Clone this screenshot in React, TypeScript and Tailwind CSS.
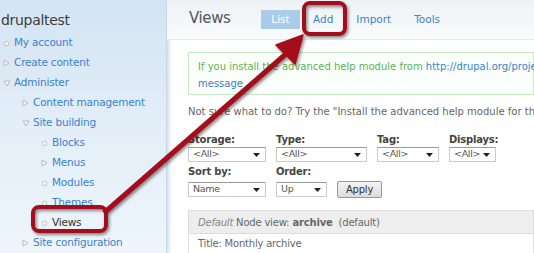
import React from "react";

type Item = { label: string; level: number; kind: "leaf" | "closed" | "open"; active?: boolean };

const menu: Item[] = [
  { label: "My account", level: 0, kind: "leaf" },
  { label: "Create content", level: 0, kind: "closed" },
  { label: "Administer", level: 0, kind: "open" },
  { label: "Content management", level: 1, kind: "closed" },
  { label: "Site building", level: 1, kind: "open" },
  { label: "Blocks", level: 2, kind: "leaf" },
  { label: "Menus", level: 2, kind: "closed" },
  { label: "Modules", level: 2, kind: "leaf" },
  { label: "Themes", level: 2, kind: "leaf" },
  { label: "Views", level: 2, kind: "leaf", active: true },
  { label: "Site configuration", level: 1, kind: "closed" },
];

function Bullet({ kind }: { kind: Item["kind"] }) {
  if (kind === "leaf")
    return (
      <svg width="7" height="7" viewBox="0 0 7 7">
        <circle cx="3.5" cy="3.5" r="2.3" fill="#f4f4f4" stroke="#c4c4c4" strokeWidth="1" />
      </svg>
    );
  if (kind === "closed")
    return (
      <svg width="7" height="8" viewBox="0 0 7 8">
        <path d="M1 1 L6 4 L1 7 Z" fill="#f4f4f4" stroke="#bdbdbd" strokeWidth="1" />
      </svg>
    );
  return (
    <svg width="8" height="7" viewBox="0 0 8 7">
      <path d="M1 1 L7 1 L4 6 Z" fill="#f4f4f4" stroke="#bdbdbd" strokeWidth="1" />
    </svg>
  );
}

function Select({ value, w }: { value: string; w: string }) {
  return (
    <div className={`${w} h-[15px] flex items-center justify-between border border-[#ccc] border-t-[#999] bg-white pl-[4px] pr-[5px] text-[9.5px] font-normal text-[#555] tracking-[-0.3px]`}>
      <span>{value}</span>
      <svg width="7" height="4" viewBox="0 0 7 4" className="shrink-0">
        <path d="M0 0 L7 0 L3.5 4 Z" fill="#222" />
      </svg>
    </div>
  );
}

export default function App() {
  const font = { fontFamily: "'DejaVu Sans', Verdana, sans-serif" };
  return (
    <div className="relative w-[534px] h-[253px] overflow-hidden flex bg-white" style={font}>
      {/* sidebar */}
      <div className="w-[167px] h-full shrink-0 bg-gradient-to-b from-[#d3e4f3] via-[#e3eef8] to-[#eef5fb] border-r border-[#c4d8ea] shadow-[2px_0_4px_rgba(120,150,180,0.35)]">
        <h2 className="pl-px pt-[11px] text-[14px] leading-[18px] text-[#3c3c3c] tracking-[-0.3px]">drupaltest</h2>
        <ul className="mt-[4px]">
          {menu.map((m) => (
            <li
              key={m.label}
              className="h-[20px] flex items-center"
              style={{ paddingLeft: 3 + m.level * 19 }}
            >
              <span className="w-[11px] flex items-center">
                <Bullet kind={m.kind} />
              </span>
              <span
                className={`text-[10.5px] tracking-[-0.2px] ${m.active ? "text-[#333]" : "text-[#3a82cc]"}`}
              >
                {m.label}
              </span>
            </li>
          ))}
        </ul>
      </div>

      {/* main */}
      <div className="flex-1 min-w-0">
        <div className="h-[40px] flex items-center pl-[22px] bg-gradient-to-b from-[#eef2f6] to-[#f9fbfc] border-b border-[#e6eaee]">
          <span className="w-[72px] text-[15px] text-[#555] tracking-[-0.4px] -mt-[2px]">Views</span>
          <div className="flex items-center text-[10.5px] text-[#3a82cc]">
            <span className="w-[39px] text-center bg-[#a9cde9] text-white py-[2px] mr-[13px]">List</span>
            <span className="mr-[23px]">Add</span>
            <span className="mr-[23px]">Import</span>
            <span>Tools</span>
          </div>
        </div>

        <div className="pl-[21px]">
          <div className="mt-[12px] h-[43px] border border-[#c6eac4] bg-[#fbfffb] pl-[9px] pt-[5px] text-[10px] leading-[17px] whitespace-nowrap">
            <div>
              <span className="text-[#5cb158]">If you install the advanced help module from </span>
              <span className="text-[#3a82cc]">http://drupal.org/project/advanced_help</span>
            </div>
            <div className="text-[#3a82cc]">message</div>
          </div>

          <p className="mt-[9px] text-[10px] text-[#666] whitespace-nowrap">
            Not sure what to do? Try the "Install the advanced help module for the getting started
          </p>

          <div className="mt-[14px] flex gap-[10px] text-[10px] font-bold text-[#444] tracking-[-0.2px]">
            <div className="w-[78px]">
              <div className="leading-[14px]">Storage:</div>
              <Select value="<All>" w="w-[78px]" />
            </div>
            <div className="w-[91px]">
              <div className="leading-[14px]">Type:</div>
              <Select value="<All>" w="w-[91px]" />
            </div>
            <div className="w-[62px]">
              <div className="leading-[14px]">Tag:</div>
              <Select value="<All>" w="w-[62px]" />
            </div>
            <div className="w-[47px]">
              <div className="leading-[14px]">Displays:</div>
              <Select value="<All>" w="w-[47px]" />
            </div>
          </div>

          <div className="mt-[3px] flex gap-[10px] items-end text-[10px] font-bold text-[#444] tracking-[-0.2px]">
            <div className="w-[78px]">
              <div className="leading-[14px] mb-[3px]">Sort by:</div>
              <Select value="Name" w="w-[78px]" />
            </div>
            <div className="w-[51px]">
              <div className="leading-[14px] mb-[3px]">Order:</div>
              <Select value="Up" w="w-[51px]" />
            </div>
            <button className="h-[17px] w-[45px] -mb-px border border-[#999] rounded-[2px] bg-gradient-to-b from-[#f4f4f4] to-[#dcdcdc] text-[10px] font-normal text-[#333]">
              Apply
            </button>
          </div>

          <div className="mt-[13px] border border-[#ddd] text-[10px] tracking-[-0.2px] whitespace-nowrap">
            <div className="h-[23px] flex items-center pl-[9px] bg-[#eeeeee] border-b border-[#ddd] text-[#666]">
              <span className="italic text-[#888]">Default</span>
              <span>&nbsp;Node view: </span>
              <span className="font-bold">&nbsp;archive</span>
              <span>&nbsp; (default)</span>
            </div>
            <div className="pl-[9px] pt-[3px] leading-[14px] text-[#666]">
              <div>Title: Monthly archive</div>
              <div>Path: archive</div>
            </div>
          </div>
        </div>
      </div>

      {/* callout overlay */}
      <svg className="absolute inset-0 pointer-events-none" width="534" height="253" viewBox="0 0 534 253">
        <defs>
          <filter id="sh" x="-20%" y="-20%" width="140%" height="140%">
            <feDropShadow dx="1.5" dy="2" stdDeviation="1.5" floodColor="#000" floodOpacity="0.45" />
          </filter>
        </defs>
        <g filter="url(#sh)" stroke="#a3111b" fill="none" strokeWidth="4">
          <rect x="33" y="207" width="73" height="24" rx="6" />
          <rect x="304" y="3" width="41" height="31" rx="6" />
          <line x1="104" y1="213" x2="287" y2="53" strokeWidth="5" />
          <path d="M303 35 L276 45 L295 64 Z" fill="#a3111b" strokeWidth="1.5" strokeLinejoin="round" />
        </g>
      </svg>
    </div>
  );
}
